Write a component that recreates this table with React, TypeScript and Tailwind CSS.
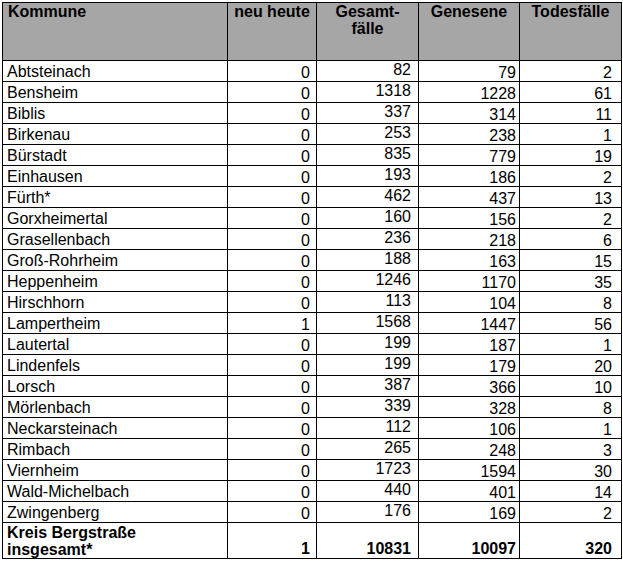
const rows: [string, number, number, number, number][] = [
  ['Abtsteinach', 0, 82, 79, 2],
  ['Bensheim', 0, 1318, 1228, 61],
  ['Biblis', 0, 337, 314, 11],
  ['Birkenau', 0, 253, 238, 1],
  ['Bürstadt', 0, 835, 779, 19],
  ['Einhausen', 0, 193, 186, 2],
  ['Fürth*', 0, 462, 437, 13],
  ['Gorxheimertal', 0, 160, 156, 2],
  ['Grasellenbach', 0, 236, 218, 6],
  ['Groß-Rohrheim', 0, 188, 163, 15],
  ['Heppenheim', 0, 1246, 1170, 35],
  ['Hirschhorn', 0, 113, 104, 8],
  ['Lampertheim', 1, 1568, 1447, 56],
  ['Lautertal', 0, 199, 187, 1],
  ['Lindenfels', 0, 199, 179, 20],
  ['Lorsch', 0, 387, 366, 10],
  ['Mörlenbach', 0, 339, 328, 8],
  ['Neckarsteinach', 0, 112, 106, 1],
  ['Rimbach', 0, 265, 248, 3],
  ['Viernheim', 0, 1723, 1594, 30],
  ['Wald-Michelbach', 0, 440, 401, 14],
  ['Zwingenberg', 0, 176, 169, 2],
];

const cell = 'border-r border-b border-black';
const head = `${cell} bg-[#a6a6a6] font-bold text-center`;

export default function App() {
  return (
    <div className="min-h-[565px] bg-white pt-[2px] pl-[2px] font-['Liberation_Sans',Arial,sans-serif] text-[16px] leading-[17px] text-black">
      <div className="grid w-[620px] grid-cols-[225px_89px_102px_101px_102px] border-l border-t border-black">
        {/* header */}
        <div className={`${cell} h-[58px] bg-[#a6a6a6] pl-[5px] font-bold`}>Kommune</div>
        <div className={head}>neu heute</div>
        <div className={head}>
          Gesamt-
          <br />
          fälle
        </div>
        <div className={head}>Genesene</div>
        <div className={head}>Todesfälle</div>

        {rows.map(([name, neu, gesamt, genesen, tote]) => (
          <div key={name} className="contents">
            <div className={`${cell} h-[21px] pt-[2px] pl-[4px]`}>{name}</div>
            <div className={`${cell} pt-[3px] pr-[6px] text-right`}>{neu}</div>
            <div className={`${cell} pr-[7px] text-right`}>{gesamt}</div>
            <div className={`${cell} pt-[3px] pr-[3px] text-right`}>{genesen}</div>
            <div className={`${cell} pt-[3px] pr-[9px] text-right`}>{tote}</div>
          </div>
        ))}

        {/* total */}
        <div className={`${cell} h-[36px] pt-[1px] pl-[4px] font-bold`}>
          Kreis Bergstraße
          <br />
          insgesamt*
        </div>
        <div className={`${cell} flex items-end justify-end pr-[6px] pb-[1px] font-bold`}>1</div>
        <div className={`${cell} flex items-end justify-end pr-[7px] pb-[1px] font-bold`}>10831</div>
        <div className={`${cell} flex items-end justify-end pr-[3px] pb-[1px] font-bold`}>10097</div>
        <div className={`${cell} flex items-end justify-end pr-[9px] pb-[1px] font-bold`}>320</div>
      </div>
    </div>
  );
}
